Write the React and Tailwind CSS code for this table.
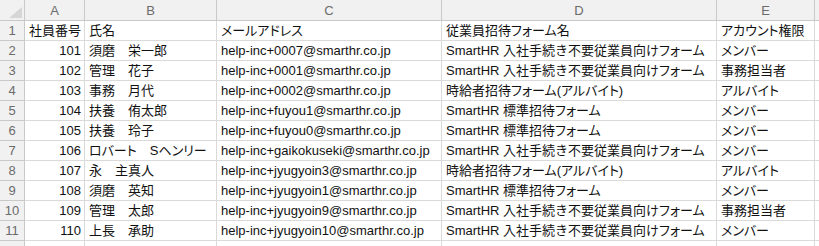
import React from "react";

const rows = [
  ["社員番号", "氏名", "メールアドレス", "従業員招待フォーム名", "アカウント権限"],
  ["101", "須磨　栄一郎", "help-inc+0007@smarthr.co.jp", "SmartHR 入社手続き不要従業員向けフォーム", "メンバー"],
  ["102", "管理　花子", "help-inc+0001@smarthr.co.jp", "SmartHR 入社手続き不要従業員向けフォーム", "事務担当者"],
  ["103", "事務　月代", "help-inc+0002@smarthr.co.jp", "時給者招待フォーム(アルバイト)", "アルバイト"],
  ["104", "扶養　侑太郎", "help-inc+fuyou1@smarthr.co.jp", "SmartHR 標準招待フォーム", "メンバー"],
  ["105", "扶養　玲子", "help-inc+fuyou0@smarthr.co.jp", "SmartHR 標準招待フォーム", "メンバー"],
  ["106", "ロバート　Sヘンリー", "help-inc+gaikokuseki@smarthr.co.jp", "SmartHR 入社手続き不要従業員向けフォーム", "メンバー"],
  ["107", "永　主真人", "help-inc+jyugyoin3@smarthr.co.jp", "時給者招待フォーム(アルバイト)", "アルバイト"],
  ["108", "須磨　英知", "help-inc+jyugyoin1@smarthr.co.jp", "SmartHR 標準招待フォーム", "メンバー"],
  ["109", "管理　太郎", "help-inc+jyugyoin9@smarthr.co.jp", "SmartHR 入社手続き不要従業員向けフォーム", "事務担当者"],
  ["110", "上長　承助", "help-inc+jyugyoin10@smarthr.co.jp", "SmartHR 入社手続き不要従業員向けフォーム", "メンバー"],
];

const cols = ["A", "B", "C", "D", "E"];

function Txt({ v }) {
  const parts = v.split(/([\u30A0-\u30FF]+)/);
  return (
    <>
      {parts.map((p, k) =>
        /^[\u30A0-\u30FF]+$/.test(p) ? (
          <span key={k} className="[font-feature-settings:'palt']">
            {p}
          </span>
        ) : (
          <React.Fragment key={k}>{p}</React.Fragment>
        )
      )}
    </>
  );
}

export default function App() {
  return (
    <div
      className="w-[819px] h-[246px] overflow-hidden bg-white text-[13px] leading-none text-[#111]"
      style={{ fontFamily: '"Liberation Sans", "Noto Sans CJK JP", sans-serif' }}
    >
      <div className="grid grid-cols-[25px_60px_132px_225px_275px_98px_1fr]">
        {/* header row */}
        <div className="relative h-[21px] bg-[#f1f1f1] border-r border-b border-[#c9c9c9]">
          <svg className="absolute left-[9px] top-[7px]" width="13" height="11" viewBox="0 0 13 11">
            <polygon points="13,0 13,11 0,11" fill="#d6d6d6" />
          </svg>
        </div>
        {cols.map((c) => (
          <div
            key={c}
            className="h-[21px] bg-[#f1f1f1] border-r border-b border-[#c9c9c9] flex items-center justify-center text-[#6b6b6b] text-[13px]"
          >
            {c}
          </div>
        ))}
        <div className="h-[21px] bg-[#f1f1f1] border-b border-[#c9c9c9]" />

        {rows.map((r, i) => (
          <React.Fragment key={i}>
            <div className="h-[20px] bg-[#f1f1f1] border-r border-b border-[#c9c9c9] flex items-center justify-center text-[#6b6b6b]">
              {i + 1}
            </div>
            {r.map((v, j) => (
              <div
                key={j}
                className={
                  "h-[20px] border-r border-b border-[#dadada] flex items-center whitespace-nowrap overflow-hidden " +
                  (i > 0 && j === 0 ? "justify-end pr-[3px]" : "pl-[4px]")
                }
              >
                <span>
                  <Txt v={v} />
                </span>
              </div>
            ))}
            <div className="h-[20px] border-b border-[#dadada]" />
          </React.Fragment>
        ))}

        {/* partial row */}
        <div className="h-[20px] bg-[#f1f1f1] border-r border-[#c9c9c9]" />
        {cols.map((c) => (
          <div key={c} className="h-[20px] border-r border-[#dadada]" />
        ))}
        <div className="h-[20px]" />
      </div>
    </div>
  );
}
